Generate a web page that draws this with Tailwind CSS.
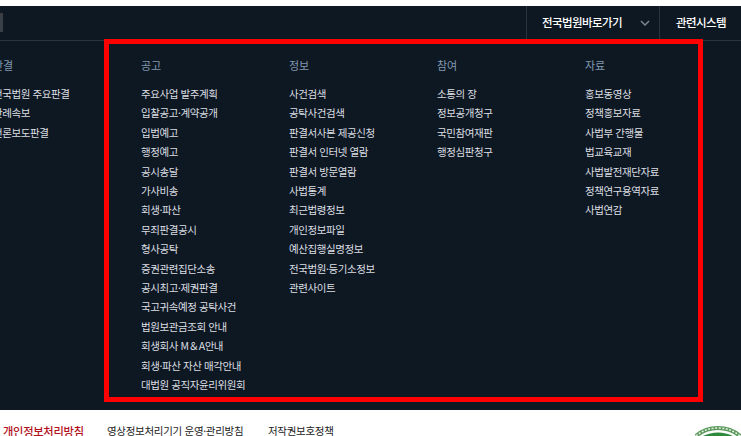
<!DOCTYPE html>
<html lang="ko">

<head>
    <meta charset="UTF-8">
    <title>대법원</title>
    <script src="https://cdn.jsdelivr.net/npm/@tailwindcss/browser@4"></script>
</head>

<body class="relative w-[741px] h-[436px] overflow-hidden bg-white font-['Noto_Sans_CJK_KR','Noto_Sans',sans-serif]">
    <div class="mt-[6px] h-[404px] bg-[#0e1822] overflow-hidden">
        <!-- top bar -->
        <header class="h-[35px] flex items-stretch border-b border-[#2b343d]">
            <div class="w-[3px] h-[19px] mt-[7px] bg-[#3a3f45]"></div>
            <div class="flex-1"></div>
            <div class="w-[133px] flex items-center border-l border-[#2b343d] pl-[15px] text-[11.5px] font-medium tracking-[-0.58px] text-white">
                전국법원바로가기
                <svg class="ml-[18px] w-[10px] h-[6px]" viewBox="0 0 10 6" fill="none" stroke="#7d858d" stroke-width="1.5"><path d="M1 1l4 4 4-4"/></svg>
            </div>
            <div class="w-[82px] flex items-center border-l border-[#2b343d] pl-[16px] text-[11.5px] font-medium tracking-[-0.58px] text-white">관련시스템</div>
        </header>

        <!-- menu columns -->
        <div class="flex ml-[-7px] pt-[15px]">
            <div class="w-[148px]">
                <h3 class="text-[11px] leading-[18px] text-[#8199b1] mb-[10px]">판결</h3>
                <ul class="text-[10.5px] leading-[19.4px] tracking-[-0.42px] text-[#dcdfe2]">
                    <li>전국법원 주요판결</li>
                    <li>판례속보</li>
                    <li>언론보도판결</li>
                </ul>
            </div>
            <div class="w-[148px]">
                <h3 class="text-[11px] leading-[18px] text-[#8199b1] mb-[10px]">공고</h3>
                <ul class="text-[10.5px] leading-[19.4px] tracking-[-0.42px] text-[#dcdfe2]">
                    <li>주요사업 발주계획</li>
                    <li>입찰공고·계약공개</li>
                    <li>입법예고</li>
                    <li>행정예고</li>
                    <li>공시송달</li>
                    <li>가사비송</li>
                    <li>회생·파산</li>
                    <li>무죄판결공시</li>
                    <li>형사공탁</li>
                    <li>증권관련집단소송</li>
                    <li>공시최고·제권판결</li>
                    <li>국고귀속예정 공탁사건</li>
                    <li>법원보관금조회 안내</li>
                    <li>회생회사 M＆A안내</li>
                    <li>회생·파산 자산 매각안내</li>
                    <li>대법원 공직자윤리위원회</li>
                </ul>
            </div>
            <div class="w-[148px]">
                <h3 class="text-[11px] leading-[18px] text-[#8199b1] mb-[10px]">정보</h3>
                <ul class="text-[10.5px] leading-[19.4px] tracking-[-0.42px] text-[#dcdfe2]">
                    <li>사건검색</li>
                    <li>공탁사건검색</li>
                    <li>판결서사본 제공신청</li>
                    <li>판결서 인터넷 열람</li>
                    <li>판결서 방문열람</li>
                    <li>사법통계</li>
                    <li>최근법령정보</li>
                    <li>개인정보파일</li>
                    <li>예산집행실명정보</li>
                    <li>전국법원·등기소정보</li>
                    <li>관련사이트</li>
                </ul>
            </div>
            <div class="w-[148px]">
                <h3 class="text-[11px] leading-[18px] text-[#8199b1] mb-[10px]">참여</h3>
                <ul class="text-[10.5px] leading-[19.4px] tracking-[-0.42px] text-[#dcdfe2]">
                    <li>소통의 장</li>
                    <li>정보공개청구</li>
                    <li>국민참여재판</li>
                    <li>행정심판청구</li>
                </ul>
            </div>
            <div class="w-[148px]">
                <h3 class="text-[11px] leading-[18px] text-[#8199b1] mb-[10px]">자료</h3>
                <ul class="text-[10.5px] leading-[19.4px] tracking-[-0.42px] text-[#dcdfe2]">
                    <li>홍보동영상</li>
                    <li>정책홍보자료</li>
                    <li>사법부 간행물</li>
                    <li>법교육교재</li>
                    <li>사법발전재단자료</li>
                    <li>정책연구용역자료</li>
                    <li>사법연감</li>
                </ul>
            </div>
        </div>
    </div>

    <!-- footer -->
    <footer class="flex h-[26px] overflow-hidden pl-[3px] pt-[13px] text-[10.5px] leading-[16px] tracking-[-0.3px] text-[#222]">
        <span class="w-[104px] text-[11.3px] font-medium text-[#b3121d]">개인정보처리방침</span>
        <span class="w-[161px]">영상정보처리기기 운영·관리방침</span>
        <span>저작권보호정책</span>
    </footer>

    <!-- seal at the bottom edge, cut off by the window -->
    <svg class="absolute left-[695px] top-[426px] w-[46px] h-[10px]" viewBox="0 0 46 10">
        <path d="M1 10Q10 2 23 2T45 10" fill="none" stroke="#5c9a5e" stroke-width="4"/>
        <path d="M1 10Q10 2 23 2T45 10" fill="none" stroke="#e6efe2" stroke-width="1.5" stroke-dasharray="2 1.5"/>
        <path d="M8 10Q15 6.5 23 6.5T38 10Z" fill="#2f8a3c"/>
    </svg>

    <!-- highlight frame over the menu -->
    <div class="absolute left-[104px] top-[39px] w-[599px] h-[363px] border-[5px] border-[#ff0000]"></div>
</body>

</html>
